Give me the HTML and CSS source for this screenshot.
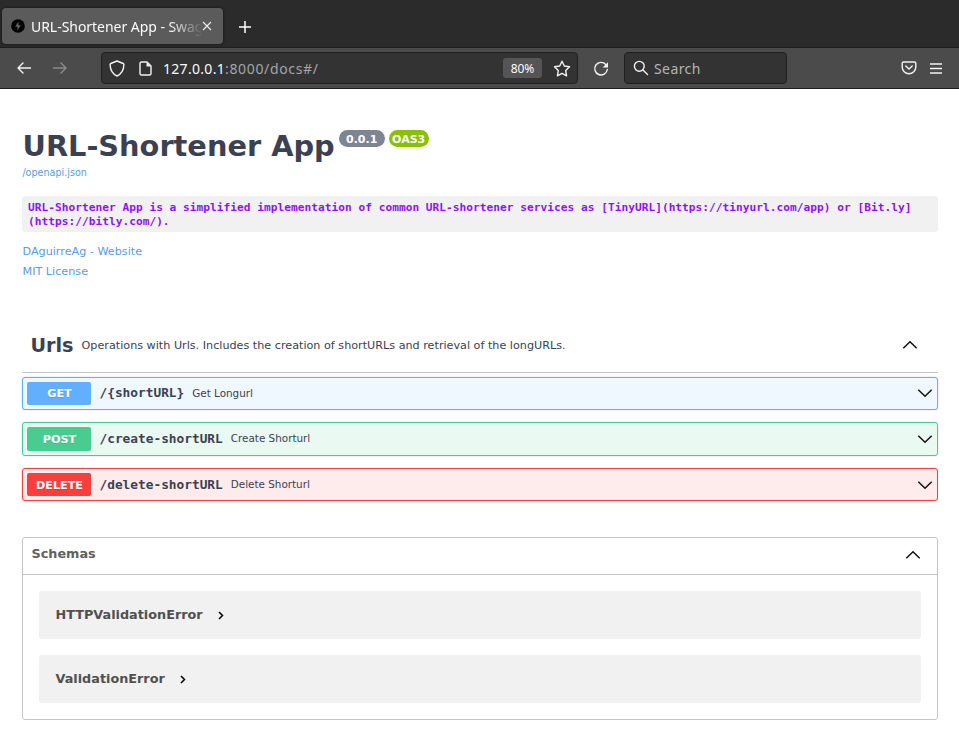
FILE: index.html
```
<!DOCTYPE html>
<html lang="en">
<head>
<meta charset="utf-8">
<title>URL-Shortener App - Swagger UI</title>
<link rel="stylesheet" href="styles.css">
</head>
<body>
<header class="tabs">
  <div class="tab">
    <svg class="favicon" width="14" height="14" viewBox="0 0 14 14"><circle cx="7" cy="7" r="6.8" fill="#000"/><path d="M7.7 2.600 4.100 7.700h2.500l-.4 3.700 3.700-5.200H7.400z" fill="#666"/></svg>
    <span class="tab-title">URL-Shortener App - Swag</span>
    <svg class="close" width="10" height="10" viewBox="0 0 10 10"><path d="m1 1 8 8M9 1 1 9"/></svg>
  </div>
  <svg class="plus" width="12" height="12" viewBox="0 0 12 12"><path d="M6 0v12M0 6h12"/></svg>
</header>
<nav class="toolbar">
  <svg class="back" width="16" height="14" viewBox="0 0 16 14"><path d="M14.500 7H2M7 2 2 7l5 5"/></svg>
  <svg class="forward" width="16" height="14" viewBox="0 0 16 14"><path d="M1.500 7H14M9 2l5 5-5 5"/></svg>
  <div class="address">
    <svg class="shield" width="16" height="17" viewBox="0 0 16 17"><path d="M8 1 14.200 3.500c.5.2.7.5.7 1-.1 5-2.300 9.300-6.900 11.500C3.400 13.800 1.200 9.500 1.100 4.500c0-.5.200-.8.7-1z"/></svg>
    <svg class="page" width="13" height="15" viewBox="0 0 13 15"><path d="M8 1H2.500Q1 1 1 2.500v10Q1 14 2.500 14h8q1.500 0 1.500-1.500V5z"/><path class="solid" d="M7.500 1v4.500H12z"/></svg>
    <span class="url"><b>127.0.0.1</b>:8000/docs#/</span>
    <span class="zoom">80%</span>
    <svg class="star" width="18" height="17" viewBox="0 0 18 17"><path d="m9 1.200 2.300 4.800 5.200.8-3.800 3.800.9 5.200L9 13.300l-4.600 2.500.9-5.200L1.500 6.800l5.200-.8z"/></svg>
  </div>
  <svg class="reload" width="16" height="16" viewBox="0 0 16 16"><path d="M12.800 3.500A6.300 6.300 0 1 0 14.300 8.500"/><path class="solid" d="M15 1.200v5.300H9.700z"/></svg>
  <div class="search">
    <svg width="16" height="16" viewBox="0 0 16 16"><circle cx="6.300" cy="6.300" r="4.900"/><path d="m10 10 4.500 4.500"/></svg>
    <span>Search</span>
  </div>
  <svg class="pocket" width="16" height="14" viewBox="0 0 16 14"><path d="M2.500 1h11q1.300 0 1.300 1.300V6a6.800 6.800 0 0 1-13.600 0V2.300Q1.200 1 2.500 1z"/><path d="m4.800 5 3.200 3 3.200-3"/></svg>
  <svg class="menu" width="12" height="11" viewBox="0 0 12 11"><path d="M0 1h12M0 5.500h12M0 10h12"/></svg>
</nav>
<main>
  <section class="info">
    <div class="heading"><h1>URL-Shortener App</h1><span class="badge">0.0.1</span><span class="badge oas">OAS3</span></div>
    <a class="spec">/openapi.json</a>
    <code class="description">URL-Shortener App is a simplified implementation of common URL-shortener services as [TinyURL](https://tinyurl.com/app) or [Bit.ly]<br>(https://bitly.com/).</code>
    <a class="link">DAguirreAg - Website</a>
    <a class="link">MIT License</a>
  </section>
  <section class="operations">
    <div class="tag"><h2>Urls</h2><p>Operations with Urls. Includes the creation of shortURLs and retrieval of the longURLs.</p><svg class="chevron" width="16" height="10" viewBox="0 0 16 10"><path d="m1.300 8.300 6.700-6.500 6.700 6.500"/></svg></div>
    <div class="op get"><span class="method">GET</span><code>/{shortURL}</code><span class="summary">Get Longurl</span><svg class="chevron" width="16" height="10" viewBox="0 0 16 10"><path d="m1.300 1.700 6.700 6.500 6.700-6.500"/></svg></div>
    <div class="op post"><span class="method">POST</span><code>/create-shortURL</code><span class="summary">Create Shorturl</span><svg class="chevron" width="16" height="10" viewBox="0 0 16 10"><path d="m1.300 1.700 6.700 6.500 6.700-6.500"/></svg></div>
    <div class="op delete"><span class="method">DELETE</span><code>/delete-shortURL</code><span class="summary">Delete Shorturl</span><svg class="chevron" width="16" height="10" viewBox="0 0 16 10"><path d="m1.300 1.700 6.700 6.500 6.700-6.500"/></svg></div>
  </section>
  <section class="schemas">
    <div class="schemas-head"><h3>Schemas</h3><svg class="chevron" width="16" height="10" viewBox="0 0 16 10"><path d="m1.300 8.300 6.700-6.500 6.700 6.500"/></svg></div>
    <div class="model"><span>HTTPValidationError</span><svg width="6" height="9" viewBox="0 0 6 9"><path d="m1 1 3.500 3.500L1 8"/></svg></div>
    <div class="model"><span>ValidationError</span><svg width="6" height="9" viewBox="0 0 6 9"><path d="m1 1 3.500 3.500L1 8"/></svg></div>
  </section>
</main>
</body>
</html>
```
FILE: styles.css
```
* { box-sizing: border-box; }
body { margin: 0; background: #fff; color: #3b4151; font-family: "DejaVu Sans", sans-serif; overflow: hidden; }
h1, h2, h3, p { margin: 0; }
svg { flex: none; fill: none; }
span, a, code, h1, h2, h3, p { white-space: nowrap; }

.tabs { height: 47px; background: #2b2b2b; display: flex; align-items: flex-start; padding: 8px 2px; font-family: "Noto Sans", sans-serif; }
.tab { width: 221px; height: 36px; border-radius: 4px; background: #5b5b5b; display: flex; align-items: center; padding-left: 9px; box-shadow: 0 0 3px #111; }
.tab-title { width: 170px; margin-left: 6px; font-size: 14px; letter-spacing: -.04px; color: #fbfbfb; -webkit-mask-image: linear-gradient(to right, #000 138px, transparent 172px); mask-image: linear-gradient(to right, #000 138px, transparent 172px); }
.close { stroke: #eee; stroke-width: 1.1; margin-left: 1px; }
.plus { stroke: #fff; stroke-width: 1.5; margin: 13px 0 0 16px; }

.toolbar { height: 42px; background: #4b4b4b; border-top: 1px solid #1e1e1e; border-bottom: 1px solid #1e1e1e; display: flex; align-items: center; padding-left: 16px; font-family: "Noto Sans", sans-serif; }
.toolbar svg { stroke: #f2f2f2; stroke-width: 1.4; stroke-linejoin: round; stroke-linecap: round; }
.toolbar .solid { fill: #f2f2f2; stroke: none; }
.toolbar .forward { stroke: #8c8c8c; margin-left: 20px; }
.address, .search { height: 32px; background: #333; border: 1px solid #202020; border-radius: 4px; display: flex; align-items: center; }
.address { width: 477px; margin-left: 33px; padding-left: 7px; }
.page { margin-left: 14px; }
.url { margin-left: 11px; font-size: 14px; letter-spacing: .65px; color: #a5a5a5; width: 340px; }
.url b { font-weight: 400; letter-spacing: .3px; color: #fbfbfb; }
.zoom { width: 39px; height: 20px; border-radius: 3px; background: #555; color: #fbfbfb; font-size: 12px; line-height: 21px; text-align: center; }
.star { margin-left: 11px; }
.reload { margin: 2px 0 0 15px; }
.search { width: 163px; margin-left: 15px; padding-left: 8px; font-size: 14px; letter-spacing: .4px; color: #b5b5b5; gap: 5px; }
.pocket { margin-left: 114px; }
.menu { margin-left: 13px; }

main { padding: 0 21px 0 22px; }
.info { height: 244px; display: flex; flex-direction: column; padding-top: 38px; }
.heading { display: flex; height: 38px; margin-left: .5px; }
h1 { font-size: 28.8px; line-height: 38px; }
.badge { width: 46px; height: 17px; margin: 3px 0 0 4px; border-radius: 9px; background: #7d8492; color: #fff; font-size: 11px; font-weight: 700; line-height: 19px; text-align: center; }
.badge.oas { width: 40px; background: #89bf04; }
.spec { height: 16px; line-height: 16px; font-size: 9.6px; color: #5a9be5; margin-left: .4px; }
.description { display: block; height: 36px; margin: 15px 0 10px; padding: 5px 6px; border-radius: 3px; background: #f1f1f1; color: #9012fe; font: 700 11.2px/14px "DejaVu Sans Mono", monospace; letter-spacing: .008px; }
.link { height: 20px; line-height: 20px; font-size: 11.2px; color: #5a9be5; margin-left: .5px; }

.tag { height: 40px; border-bottom: 1px solid #c4c6ca; display: flex; align-items: flex-start; padding-left: 8.5px; }
.tag h2 { font-size: 19.2px; line-height: 26px; }
.tag p { margin-left: 8px; font-size: 11.2px; line-height: 26px; }
.chevron { stroke: #111; stroke-width: 1.5; margin-left: auto; }
.tag .chevron { margin-right: 20px; margin-top: 7px; }
.op { height: 33px; margin-top: 4px; border: 1px solid; border-radius: 3px; display: flex; align-items: flex-start; padding: 4px 4px 0; box-shadow: 0 0 2px rgba(0,0,0,.19); }
.op.post { height: 34px; margin-top: 12px; }
.op.delete { margin-top: 12px; }
.get { border-color: #61affe; background: #eff7ff; }
.post { border-color: #49cc90; background: #ebf9f3; }
.delete { border-color: #f93e3e; background: #feebeb; }
.method { width: 64px; height: 23px; padding-left: 1px; border-radius: 2px; color: #fff; font-size: 11.2px; font-weight: 700; line-height: 23px; text-align: center; text-shadow: 0 1px 0 rgba(0,0,0,.1); }
.get .method { background: #61affe; }
.post .method { background: #49cc90; height: 24px; line-height: 25px; }
.delete .method { background: #f93e3e; line-height: 25px; }
.op code { margin: 1px 0 0 8.5px; font: 700 12.8px/20px "DejaVu Sans Mono", monospace; }
.post code, .delete code { margin-top: 2px; }
.summary { margin: 1px 0 0 8px; font-size: 10.4px; line-height: 20px; }
.op .chevron { margin-top: 6px; }
.post .chevron, .delete .chevron { margin-top: 7px; }

.schemas { margin-top: 36px; height: 183px; border: 1px solid #c4c4c6; border-radius: 3px; }
.schemas-head { height: 37px; border-bottom: 1px solid #c4c4c6; display: flex; padding: 6px 16px 0 8.5px; }
h3 { font-size: 12.8px; line-height: 20px; color: #606060; }
.schemas-head .chevron { margin-top: 6px; }
.model { height: 48px; margin: 16px 16px 0; padding: 0 0 2px 16.5px; border-radius: 3px; background: #f1f1f1; color: #505050; font-size: 12.8px; font-weight: 700; display: flex; align-items: center; }
.model svg { margin: 3px 0 0 15.500px; stroke: #000; stroke-width: 1.5; }
```
